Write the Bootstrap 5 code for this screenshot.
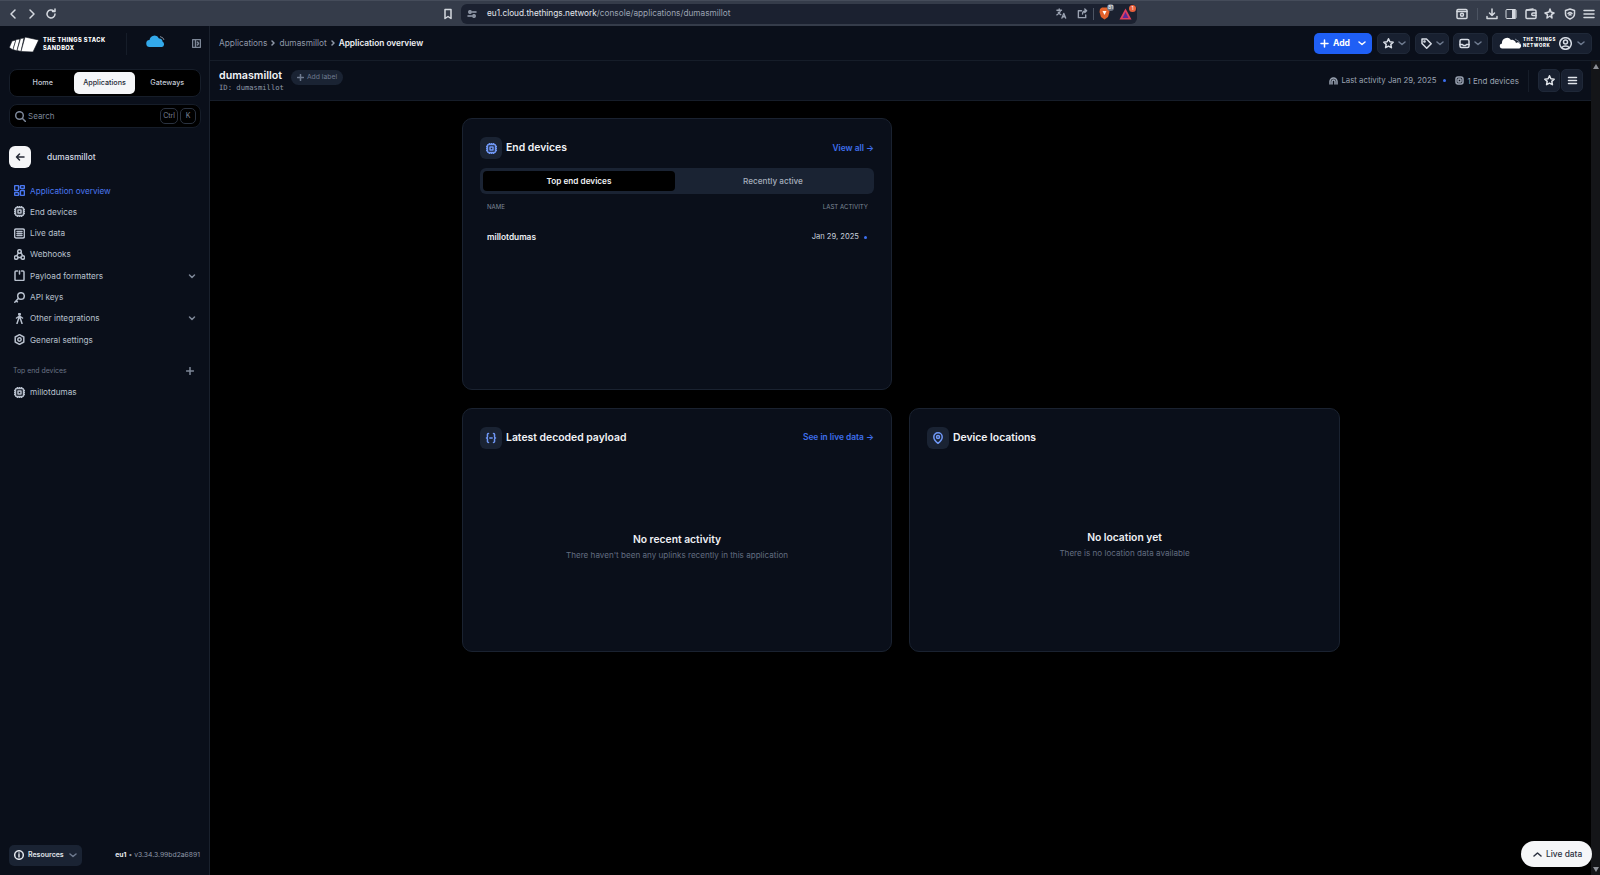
<!DOCTYPE html>
<html lang="en">
<head>
<meta charset="utf-8">
<title>Application overview</title>
<link href="https://cdn.jsdelivr.net/npm/bootstrap@5.3.0/dist/css/bootstrap.min.css" rel="stylesheet">
<style>
html,body{height:100%;overflow:hidden}
body{background:#000;font-family:Inter,"Liberation Sans",sans-serif;font-size:8.3px;color:#c9d0dc}
svg{display:block;flex:none}
.ic{fill:none;stroke:currentColor;stroke-width:1.5;stroke-linecap:round;stroke-linejoin:round}
.shell{height:875px;width:1600px}
.chrome{height:26px;background:#353c4a;color:#d5d9e0;padding:0 5px 0 7px;border-top:1px solid #454c5a}
.chrome-nav{width:447px;gap:7px}
.urlbar{width:676px;height:20px;background:#1b2130;border-radius:6px;margin-left:7px;padding:0 5px 0 6px;color:#9ba3b2;font-size:8.25px}
.urlbar b{font-weight:400;color:#e4e7ec}
.url-ico{margin-right:10px}
.url-tools{margin-left:auto}
.chrome-right{margin-left:auto;gap:7.4px}
.sep-v{width:1px;background:#4c5462;height:12px}
.badge-wrap{position:relative}
.mini-dot{position:absolute;top:-3px;right:-4px;width:7px;height:7px;border-radius:50%;font-size:5px;line-height:7px;text-align:center;color:#fff}
.side{width:210px;background:#0a0f1a;border-right:1px solid #1a212d;flex:none}
.side-top{height:35px;padding:0 9px}
.brand{font-size:5.7px;font-weight:800;letter-spacing:.42px;line-height:8px;color:#fff;margin-left:4px;white-space:nowrap}
.side-div{width:1px;height:22px;background:#161d29;margin-left:20px}
.tabs-main{margin:8px 8px 0 9px;height:28px;background:#000;border:1px solid #161d29;border-radius:8px;padding:2px}
.tabs-main a{flex:1;text-align:center;line-height:22px;color:#c3cad6;font-weight:500;font-size:7.2px;text-decoration:none;border-radius:5px}
.tabs-main a.on{background:#f5f6f8;color:#242a36;flex:0 0 61px;margin:0 1.500px 0 .5px}
.searchbox{margin:7px 8px 0 9px;height:24px;background:#000;border:1px solid #161d29;border-radius:8px;padding:0 4px 0 5px;color:#7c8698;font-size:8px;gap:2px}
.kbd-k{border:1px solid #2a3240;border-radius:5px;height:16px;min-width:16px;padding:0 2px;text-align:center;line-height:14px;font-size:7px;color:#7c8698}
.back-row{margin:18px 9px 0;height:22px}
.back-btn{width:22px;height:22px;background:#f5f6f8;border-radius:6px;color:#242a36}
.back-name{margin-left:16px;color:#d5dae3;font-size:8.4px;font-weight:500}
.menu-list{margin:12px 0 0;padding:0 0 0 14px;list-style:none}
.menu-list li{height:21.3px;gap:5px;color:#b8c0cd;font-size:8.2px;padding-right:13px}
.menu-list li.on{color:#4a78f0}
.menu-list li span{flex:1}
.chev{color:#7d8797}
.menu-label{margin:10px 15px 0 13px;height:21px;color:#6a7486;font-size:6.9px}
.side-foot{margin-top:auto;height:40px;padding:0 9px}
.res-btn{width:73px;height:21px;background:#1a2333;border-radius:5px;color:#e0e4ea;font-weight:600;font-size:7px;padding:0 5px;gap:4px}
.ver{margin-left:auto;font-size:6.8px;color:#8f98a8}
.ver b{color:#e8ebf0;font-weight:700}
.top{height:35px;background:#0a0f1a;border-bottom:1px solid #161d29;padding:0 8px 0 9px;flex:none}
.crumbs{gap:3px;color:#8f98a8;font-size:8.3px}
.crumbs b{color:#eef0f4;font-weight:600}
.btn-add{height:21px;width:58px;background:#1f5ff5;color:#fff;font-weight:700;font-size:8.6px;border:0;border-radius:5px;padding:0;gap:4px;margin-left:auto}
.btn-dk{height:21px;background:#182030;color:#d8dde6;border-radius:5px;border:1px solid #1f2838;padding:0 5px;gap:4px}
.btn-gap5{margin-left:5px}
.btn-gap4{margin-left:4px}
.ttn-btn{width:100px;padding:0 6px;gap:0}
.ttn-word{font-size:4.4px;font-weight:800;line-height:6px;letter-spacing:.6px;color:#fff;text-align:left;flex:none;width:32px;white-space:nowrap}
.ttn-user{margin-left:4px}
.sub{height:40px;background:#0a0f1a;border-bottom:1px solid #161d29;padding:0 8px 0 9px;flex:none}
.ttl{font-size:10.7px;font-weight:600;color:#f1f3f6;line-height:14px}
.mono-id{font-family:"DejaVu Sans Mono","Liberation Mono",monospace;font-size:7.2px;color:#8f98a8;line-height:10px;margin-top:0}
.pill-add{height:15px;width:52px;background:#1a2333;border-radius:8px;margin-left:7px;margin-top:-7px;color:#6f7b90;font-size:6.8px;gap:3px;padding-left:6px}
.meta{margin-left:auto;gap:3px;color:#9aa3b2;font-size:7.8px}
.meta-count{font-size:8px;margin-left:1px}
.blue-dot{width:3px;height:3px;border-radius:50%;background:#3c6ff0}
.dot-after{margin:0 6px 0 3px}
.sub-sep{width:1px;height:22px;background:#161d29;margin:0 9px}
.sq-btn{width:22px;height:23px;background:#182030;border:1px solid #1f2838;border-radius:5px;color:#e0e4ea}
.stage{min-height:0;position:relative}
.pane{padding-top:17px}
.board{width:878px;margin:0 auto 0 252px;gap:17.5px}
.panel{background:#0a0f1a;border:1px solid #1a2230;border-radius:10px;padding:18px 17px;color:#c9d0dc;width:430px}
.panel-wide{width:431px}
.panel-a{height:272px}
.panel-b{height:244.5px}
.panel-head{height:22px;gap:4px}
.ic-box{width:22px;height:22px;border-radius:6px;background:#1a2333;color:#6f97f5}
.panel-title{font-size:10.4px;font-weight:600;color:#f1f3f6}
.more{margin-left:auto;font-size:8.4px;font-weight:600;color:#3f6fee;text-decoration:none}
.switch{margin-top:9px;height:26px;background:#1a2333;border-radius:6px;padding:3px}
.switch div{flex:1;text-align:center;line-height:20px;font-size:8.2px;font-weight:500;color:#a6aebc}
.switch div.on{background:#000;color:#f1f3f6;border-radius:4px;font-weight:600;flex:0 0 192px}
.tbl-h{margin:8px 6px 0 7px;color:#7d8797;font-size:6.1px;line-height:9px}
.tbl-r{margin:20px 7px 0;font-size:8.3px;line-height:12px}
.tbl-r b{font-weight:600;color:#eef0f4}
.tbl-date{font-size:7.6px;gap:5px}
.empty{text-align:center}
.empty h6{font-size:10.3px;font-weight:600;color:#eef0f4;margin:0 0 3px;line-height:14px}
.empty p{font-size:8.1px;color:#626d80;margin:0;line-height:12px}
.empty-a{margin-top:83px}
.empty-b{margin-top:81px}
.scrolly{width:9px;background:#141518;flex:none;color:#8d9097;padding:3px 1.500px}
.live{position:absolute;right:-1px;bottom:8px;height:26px;width:71px;background:#f5f6f8;color:#2a3040;border-radius:13px;font-size:8.4px;font-weight:500;gap:4px;padding-left:12px}
</style>
</head>
<body>
<div class="shell d-flex flex-column">
  <div class="chrome d-flex align-items-center">
    <div class="chrome-nav d-flex align-items-center">
      <svg class="ic" width="12" height="12" viewBox="0 0 12 12"><path d="M8 2 4 6l4 4"/></svg>
      <svg class="ic" width="12" height="12" viewBox="0 0 12 12"><path d="M4 2l4 4-4 4"/></svg>
      <svg class="ic" width="12" height="12" viewBox="0 0 12 12"><path d="M10 6a4 4 0 1 1-1.300-3M10 1v2.500H7.500"/></svg>
      <svg class="ic ms-auto" width="12" height="12" viewBox="0 0 12 12"><path d="M3 1.500h6v9l-3-2-3 2z"/></svg>
    </div>
    <div class="urlbar d-flex align-items-center">
      <svg class="ic url-ico" width="10" height="10" viewBox="0 0 10 10" stroke-width="1"><circle cx="3" cy="3" r="1.200"/><path d="M5.500 3H9M1 7h3.500"/><circle cx="7" cy="7" r="1.200"/></svg>
      <span><b>eu1.cloud.thethings.network</b>/console/applications/dumasmillot</span>
      <div class="url-tools d-flex align-items-center">
        <svg class="ic" width="11" height="11" viewBox="0 0 12 12" stroke-width="1"><path d="M1 2.500h5M3.500 1v1.500M5 2.500C4.500 5 3 6.500 1 7.500M2.500 4.500c.5 1.300 1.500 2.200 2.700 2.800M6.500 11 8.500 6l2 5M7.200 9.500h2.600"/></svg>
        <svg class="ic" style="margin-left:10px" width="11" height="11" viewBox="0 0 12 12" stroke-width="1"><path d="M5 3H1.500v7.500h8V7.500M6 6.500C6 4 7.500 3 10.500 3M8.500 1l2 2-2 2"/></svg>
        <div class="sep-v" style="margin:0 5px"></div>
        <div class="badge-wrap"><svg width="11" height="13" viewBox="0 0 11 13"><path d="M1 2 3 .5h5L10 2l.5 3-1.500 5-3.500 2.500L2 10 .5 5z" fill="#e2622b"/><path d="M3.500 4h4L5.500 8z" fill="#fff"/></svg><span class="mini-dot" style="background:#6b7280">81</span></div>
        <div class="badge-wrap" style="margin-left:9px"><svg width="13" height="12" viewBox="0 0 13 12"><path d="M6.500.5 12.500 11.500H.5z" fill="#e0405f"/><path d="M6.500 4 9.500 10h-6z" fill="#5b2a9a"/></svg><span class="mini-dot" style="background:#e8603c">1</span></div>
      </div>
    </div>
    <div class="chrome-right d-flex align-items-center">
      <svg class="ic" width="12" height="12" viewBox="0 0 12 12" stroke-width="1"><rect x="1" y="1.500" width="10" height="9" rx="1"/><path d="M1 3.500h10"/><circle cx="6" cy="6.800" r="1.500"/></svg>
      <div class="sep-v" style="margin:0 1px"></div>
      <svg class="ic" width="12" height="12" viewBox="0 0 12 12" stroke-width="1"><path d="M6 1v6.500M3.500 5 6 7.500 8.500 5M1 8.500V10.500h10V8.500"/></svg>
      <svg width="12" height="12" viewBox="0 0 12 12"><rect x="1" y="1.500" width="10" height="9" rx="1" fill="none" stroke="#d5d9e0"/><rect x="7" y="2" width="3.500" height="8" fill="#d5d9e0"/></svg>
      <svg class="ic" width="12" height="12" viewBox="0 0 12 12" stroke-width="1"><rect x="1" y="2" width="10" height="8.500" rx="1"/><path d="M11 5H8a1 1 0 0 0 0 2.500h3M1.500 2 8 1"/></svg>
      <svg class="ic" width="12" height="12" viewBox="0 0 12 12" stroke-width="1"><path d="M6 1 7 4 10 5 7.500 6.500 8 10 6 8 3 10 3.500 6.500 1 5 5 4z"/></svg>
      <svg class="ic" width="12" height="12" viewBox="0 0 12 12" stroke-width="1"><path d="M6 1 10.500 2.500V6c0 2.500-2 4-4.500 5C3.500 10 1.500 8.500 1.500 6V2.500z"/><path d="M4 5.500a3 3 0 0 1 4 0M5 7a1.500 1.500 0 0 1 2 0"/></svg>
      <svg class="ic" width="12" height="12" viewBox="0 0 12 12" stroke-width="1"><path d="M1 2.500h10M1 6h10M1 9.500h10"/></svg>
    </div>
  </div>

  <div class="d-flex flex-grow-1" style="min-height:0">
    <aside class="side d-flex flex-column">
      <div class="side-top d-flex align-items-center">
        <svg width="30" height="16" viewBox="0 0 30 16"><g fill="#fff" stroke="#0a0f1a" stroke-width=".6" stroke-linejoin="round"><path d="M3 5 .3 11.500 4 14 7 4z"/><path d="M7 3.500 4 13.500l4 1.500L11 3z"/><path d="M11.500 2.500 8 14.500l4 1L15 2z"/><path d="M16 1 12 15.500l12 .5 5.700-12z"/></g></svg>
        <div class="brand">THE THINGS STACK<br>SANDBOX</div>
        <div class="side-div"></div>
        <svg class="ms-auto" style="margin:-5px 26px 0 0" width="20" height="13" viewBox="0 0 20 13"><path d="M4 12a3.500 3.500 0 0 1-.5-7A5 5 0 0 1 13 3.500a3 3 0 0 1 3.500 3A3 3 0 0 1 16 12z" fill="#33a9ea"/><path d="M14 1.500l3 1.500 1 2" stroke="#7a8595" fill="none"/></svg>
        <svg class="ic" style="color:#7d8797;margin-right:-1px" width="9" height="9" viewBox="0 0 9 9" stroke-width="1"><rect x=".5" y=".5" width="8" height="8" rx="1"/><path d="M3.500.5v8M5.500 3l1 1.500-1 1.500"/></svg>
      </div>
      <nav class="tabs-main d-flex align-items-stretch">
        <a href="#">Home</a><a href="#" class="on">Applications</a><a href="#">Gateways</a>
      </nav>
      <div class="searchbox d-flex align-items-center">
        <svg class="ic" width="11" height="11" viewBox="0 0 11 11" stroke-width="1"><circle cx="4.500" cy="4.500" r="3.800"/><path d="m7.500 7.500 3 3"/></svg>
        <span class="flex-grow-1">Search</span>
        <span class="kbd-k">Ctrl</span><span class="kbd-k">K</span>
      </div>
      <div class="back-row d-flex align-items-center">
        <div class="back-btn d-flex align-items-center justify-content-center"><svg class="ic" width="10" height="10" viewBox="0 0 10 10"><path d="M9 5H1.500M4.500 2 1.500 5l3 3"/></svg></div>
        <div class="back-name">dumasmillot</div>
      </div>
      <ul class="menu-list">
        <li class="on d-flex align-items-center"><svg class="ic" width="11" height="11" viewBox="0 0 11 11" stroke-width="1.100"><rect x=".6" y=".6" width="4" height="5" rx="1"/><rect x="6.400" y=".6" width="4" height="3" rx="1"/><rect x=".6" y="7.400" width="4" height="3" rx="1"/><rect x="6.400" y="5.400" width="4" height="5" rx="1"/></svg><span>Application overview</span></li>
        <li class="d-flex align-items-center"><svg class="ic" width="11" height="11" viewBox="0 0 11 11" stroke-width=".8"><rect x="1.500" y="1.500" width="8" height="8" rx="1.200"/><rect x="4" y="4" width="3" height="3"/><path d="M3.500.3v1M5.500.3v1M7.500.3v1M3.500 9.700v1M5.500 9.700v1M7.500 9.700v1M.3 3.500h1M.3 5.500h1M.3 7.500h1M9.700 3.500h1M9.700 5.500h1M9.700 7.500h1"/></svg><span>End devices</span></li>
        <li class="d-flex align-items-center"><svg class="ic" width="11" height="11" viewBox="0 0 11 11" stroke-width="1"><rect x=".6" y="1" width="9.800" height="9" rx="1.500"/><path d="M3 3.500h5M3 5.500h5M3 7.500h5"/></svg><span>Live data</span></li>
        <li class="d-flex align-items-center"><svg class="ic" width="11" height="11" viewBox="0 0 11 11" stroke-width=".9"><circle cx="5.500" cy="2.500" r="1.800"/><circle cx="2.200" cy="8.500" r="1.800"/><circle cx="8.800" cy="8.500" r="1.800"/><path d="M4.300 4 3 6.500M7 3.500 8.500 6.500M4 8.500h3"/></svg><span>Webhooks</span></li>
        <li class="d-flex align-items-center"><svg class="ic" width="11" height="11" viewBox="0 0 11 11" stroke-width="1"><path d="M3.500 1H2A1 1 0 0 0 1 2v7.500a1 1 0 0 0 1 1h7a1 1 0 0 0 1-1V2a1 1 0 0 0-1-1H7.500M5.500 1v3"/></svg><span>Payload formatters</span><svg class="ic chev" width="8" height="8" viewBox="0 0 8 8" stroke-width="1"><path d="m1.500 3 2.500 2.500L6.500 3"/></svg></li>
        <li class="d-flex align-items-center"><svg class="ic" width="11" height="11" viewBox="0 0 11 11" stroke-width="1"><circle cx="7" cy="4" r="3.300"/><path d="M4.500 6.300 .8 10.200M2.200 8.800l1.200 1"/></svg><span>API keys</span></li>
        <li class="d-flex align-items-center"><svg class="ic" width="11" height="11" viewBox="0 0 11 11" stroke-width="1"><circle cx="5.500" cy="1.300" r=".8"/><path d="M2.500 5 5.500 3l3 2M5.500 3 3 10.500M5.500 3 8 10.500"/></svg><span>Other integrations</span><svg class="ic chev" width="8" height="8" viewBox="0 0 8 8" stroke-width="1"><path d="m1.500 3 2.500 2.500L6.500 3"/></svg></li>
        <li class="d-flex align-items-center"><svg class="ic" width="11" height="11" viewBox="0 0 11 11" stroke-width="1"><path d="M5.500.6 9.800 3v5L5.500 10.400 1.200 8V3z"/><circle cx="5.500" cy="5.500" r="1.700"/></svg><span>General settings</span></li>
      </ul>
      <div class="menu-label d-flex align-items-center justify-content-between"><span>Top end devices</span><svg class="ic chev" width="8" height="8" viewBox="0 0 8 8" stroke-width="1"><path d="M4 .5v7M.5 4h7"/></svg></div>
      <ul class="menu-list" style="margin-top:0">
        <li class="d-flex align-items-center"><svg class="ic" width="11" height="11" viewBox="0 0 11 11" stroke-width=".8"><rect x="1.500" y="1.500" width="8" height="8" rx="1.200"/><rect x="4" y="4" width="3" height="3"/><path d="M3.500.3v1M5.500.3v1M7.500.3v1M3.500 9.700v1M5.500 9.700v1M7.500 9.700v1M.3 3.500h1M.3 5.500h1M.3 7.500h1M9.700 3.500h1M9.700 5.500h1M9.700 7.500h1"/></svg><span>millotdumas</span></li>
      </ul>
      <div class="side-foot d-flex align-items-center">
        <div class="res-btn d-flex align-items-center"><svg class="ic" width="10" height="10" viewBox="0 0 10 10" stroke-width="1"><circle cx="5" cy="5" r="4.300"/><path d="M5 4.500v2.500M5 2.900v.1"/></svg><span class="flex-grow-1">Resources</span><svg class="ic" style="color:#6f7b90" width="8" height="8" viewBox="0 0 8 8" stroke-width="1"><path d="m1 3 3 2.500L7 3"/></svg></div>
        <div class="ver"><b>eu1</b> • v3.34.3.99bd2a6891</div>
      </div>
    </aside>

    <div class="d-flex flex-column flex-grow-1" style="min-width:0">
      <header class="top d-flex align-items-center">
        <div class="crumbs d-flex align-items-center"><span>Applications</span><svg class="ic" width="6" height="6" viewBox="0 0 6 6" stroke-width=".8"><path d="m2 1 2 2-2 2"/></svg><span>dumasmillot</span><svg class="ic" width="6" height="6" viewBox="0 0 6 6" stroke-width=".8"><path d="m2 1 2 2-2 2"/></svg><b>Application overview</b></div>
        <button class="btn btn-add d-flex align-items-center justify-content-center"><svg class="ic" width="9" height="9" viewBox="0 0 9 9"><path d="M4.500 1v7M1 4.500h7"/></svg>Add<svg class="ic ms-1" width="8" height="8" viewBox="0 0 8 8" stroke-width="1.100"><path d="m1 3 3 2.500L7 3"/></svg></button>
        <button class="btn btn-dk btn-gap5 d-flex align-items-center" style="width:33px"><svg class="ic" width="11" height="11" viewBox="0 0 11 11" stroke-width="1.100"><path d="m5.500.8 1.400 3 3.300.4-2.400 2.200.6 3.300-2.900-1.600-2.900 1.600.6-3.300L.8 4.200l3.300-.4z"/></svg><svg class="ic" style="color:#6f7b90" width="8" height="8" viewBox="0 0 8 8" stroke-width="1"><path d="m1 3 3 2.500L7 3"/></svg></button>
        <button class="btn btn-dk btn-gap5 d-flex align-items-center" style="width:34px"><svg class="ic" width="11" height="11" viewBox="0 0 11 11" stroke-width="1.100"><path d="M1 1h4.500l4.700 4.700-4.500 4.500L1 5.500z"/><circle cx="3.500" cy="3.500" r=".6"/></svg><svg class="ic" style="color:#6f7b90" width="8" height="8" viewBox="0 0 8 8" stroke-width="1"><path d="m1 3 3 2.500L7 3"/></svg></button>
        <button class="btn btn-dk btn-gap4 d-flex align-items-center" style="width:35px"><svg class="ic" width="11" height="11" viewBox="0 0 11 11" stroke-width="1.100"><rect x="1" y="1.500" width="9" height="8" rx="1.500"/><path d="M1 6.500h2.500l1 1h2l1-1H10"/></svg><svg class="ic" style="color:#6f7b90" width="8" height="8" viewBox="0 0 8 8" stroke-width="1"><path d="m1 3 3 2.500L7 3"/></svg></button>
        <button class="btn btn-dk btn-gap4 ttn-btn d-flex align-items-center">
          <svg width="24" height="12" viewBox="0 0 24 12"><path d="M3.500 11.500a2.500 2.500 0 0 1-.5-5 5 5 0 0 1 9-3.500 4 4 0 0 1 5 3 2.800 2.800 0 0 1 3.500 5.500z" fill="#fff"/><path d="M16 2l4 2.500 1 2.500" stroke="#7a8595" fill="none"/></svg>
          <span class="ttn-word">THE THINGS<br>NETWORK</span>
          <svg class="ic ttn-user" width="13" height="13" viewBox="0 0 13 13" stroke-width="1.100"><circle cx="6.500" cy="6.500" r="5.800"/><circle cx="6.500" cy="5" r="2"/><path d="M3 10.500c1-2 6-2 7 0"/></svg>
          <svg class="ic ms-auto" style="color:#6f7b90" width="8" height="8" viewBox="0 0 8 8" stroke-width="1"><path d="m1 3 3 2.500L7 3"/></svg>
        </button>
      </header>
      <div class="d-flex flex-grow-1" style="min-height:0">
        <div class="d-flex flex-column flex-grow-1" style="min-width:0">
          <section class="sub d-flex align-items-center">
            <div><div class="ttl">dumasmillot</div><div class="mono-id">ID: dumasmillot</div></div>
            <div class="pill-add d-flex align-items-center"><svg class="ic" width="7" height="7" viewBox="0 0 7 7" stroke-width=".8"><path d="M3.500.5v6M.5 3.500h6"/></svg>Add label</div>
            <div class="meta d-flex align-items-center">
              <svg class="ic" width="9" height="9" viewBox="0 0 9 9" stroke-width="1"><path d="M1 8V5.500a3.500 3.500 0 0 1 7 0V8M3 8V5.500a1.500 1.500 0 0 1 3 0V8"/></svg><span>Last activity Jan 29, 2025</span><span class="blue-dot dot-after"></span>
              <svg class="ic" width="9" height="9" viewBox="0 0 9 9" stroke-width="1"><rect x="1" y="1" width="7" height="7" rx="2"/><rect x="3" y="3" width="3" height="3" rx=".6"/></svg><span class="meta-count">1 End devices</span>
            </div>
            <div class="sub-sep"></div>
            <button class="btn sq-btn d-flex align-items-center justify-content-center p-0"><svg class="ic" width="11" height="11" viewBox="0 0 11 11" stroke-width="1.100"><path d="m5.500.8 1.400 3 3.300.4-2.400 2.200.6 3.300-2.900-1.600-2.900 1.600.6-3.300L.8 4.200l3.300-.4z"/></svg></button>
            <button class="btn sq-btn d-flex align-items-center justify-content-center p-0" style="margin-left:1px"><svg class="ic" width="11" height="11" viewBox="0 0 11 11" stroke-width="1.100"><path d="M1.500 2.500h8M1.500 5.500h8M1.500 8.500h8"/></svg></button>
          </section>
          <main class="stage pane flex-grow-1">
            <div class="board d-flex flex-column">
              <div class="panel panel-a">
                <div class="panel-head d-flex align-items-center">
                  <div class="ic-box d-flex align-items-center justify-content-center"><svg class="ic" width="11" height="11" viewBox="0 0 11 11" stroke-width=".8"><rect x="1.500" y="1.500" width="8" height="8" rx="1.200"/><rect x="4" y="4" width="3" height="3"/><path d="M3.500.3v1M5.500.3v1M7.500.3v1M3.500 9.700v1M5.500 9.700v1M7.500 9.700v1M.3 3.500h1M.3 5.500h1M.3 7.500h1M9.700 3.500h1M9.700 5.500h1M9.700 7.500h1"/></svg></div>
                  <div class="panel-title">End devices</div>
                  <a class="more" href="#">View all →</a>
                </div>
                <div class="switch d-flex"><div class="on">Top end devices</div><div>Recently active</div></div>
                <div class="tbl-h d-flex justify-content-between"><span>NAME</span><span>LAST ACTIVITY</span></div>
                <div class="tbl-r d-flex justify-content-between"><b>millotdumas</b><span class="tbl-date d-flex align-items-center">Jan 29, 2025<span class="blue-dot"></span></span></div>
              </div>
              <div class="d-flex" style="gap:17px">
                <div class="panel panel-b">
                  <div class="panel-head d-flex align-items-center">
                    <div class="ic-box d-flex align-items-center justify-content-center"><svg class="ic" width="12" height="12" viewBox="0 0 12 12" stroke-width="1"><path d="M3.500 1.500C2 1.500 2.500 3 2.500 4.500S1.500 6 1.500 6s1 0 1 1.500-.5 3 1 3M8.500 1.500c1.500 0 1 1.500 1 3s1 1.500 1 1.500-1 0-1 1.500.5 3-1 3M4.800 6h2.400"/></svg></div>
                    <div class="panel-title">Latest decoded payload</div>
                    <a class="more" href="#">See in live data →</a>
                  </div>
                  <div class="empty empty-a"><h6>No recent activity</h6><p>There haven't been any uplinks recently in this application</p></div>
                </div>
                <div class="panel panel-b panel-wide">
                  <div class="panel-head d-flex align-items-center">
                    <div class="ic-box d-flex align-items-center justify-content-center"><svg class="ic" width="12" height="12" viewBox="0 0 12 12" stroke-width="1"><path d="M6 11.300C3.500 9.500 1.800 7.500 1.800 5a4.200 4.200 0 0 1 8.400 0c0 2.500-1.700 4.500-4.200 6.300z"/><circle cx="6" cy="5" r="1.500"/></svg></div>
                    <div class="panel-title">Device locations</div>
                  </div>
                  <div class="empty empty-b"><h6>No location yet</h6><p>There is no location data available</p></div>
                </div>
              </div>
            </div>
            <div class="live d-flex align-items-center"><svg class="ic" width="9" height="9" viewBox="0 0 9 9" stroke-width="1.300"><path d="m1 6 3.500-3L8 6"/></svg>Live data</div>
          </main>
        </div>
        <div class="scrolly d-flex flex-column justify-content-between">
          <svg width="6" height="5" viewBox="0 0 6 5"><path d="M3 0 6 5H0z" fill="currentColor"/></svg>
          <svg width="6" height="5" viewBox="0 0 6 5"><path d="M0 0h6L3 5z" fill="currentColor"/></svg>
        </div>
      </div>
    </div>
  </div>
</div>
<script src="https://cdn.jsdelivr.net/npm/bootstrap@5.3.0/dist/js/bootstrap.bundle.min.js"></script>
</body>
</html>
